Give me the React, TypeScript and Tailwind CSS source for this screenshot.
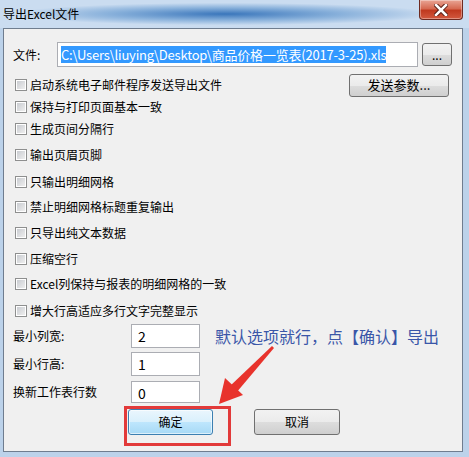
import React from 'react';

const options = [
  { label: '启动系统电子邮件程序发送导出文件', cls: '' },
  { label: '保持与打印页面基本一致', cls: '' },
  { label: '生成页间分隔行', cls: '' },
  { label: '输出页眉页脚', cls: 'mt-[4px]' },
  { label: '只输出明细网格', cls: 'mt-[5px]' },
  { label: '禁止明细网格标题重复输出', cls: 'mt-[3px]' },
  { label: '只导出纯文本数据', cls: 'mt-[4px]' },
  { label: '压缩空行', cls: 'mt-[4px]' },
  { label: 'Excel列保持与报表的明细网格的一致', cls: 'mt-[3px]' },
  { label: '增大行高适应多行文字完整显示', cls: 'mt-[5px]' },
];

const btn =
  'flex items-center justify-center rounded-[3px] border border-[#707070] bg-[linear-gradient(#f2f2f2_0%,#ebebeb_50%,#dddddd_51%,#cfcfcf_100%)] text-[12px] text-black';

const Checkbox: React.FC = () => (
  <div className="w-[12px] h-[12px] border border-[#8e8f8f] bg-white p-[1px]">
    <div className="w-full h-full bg-[linear-gradient(135deg,#c9ccd1_0%,#eeeeee_100%)]" />
  </div>
);

const App: React.FC = () => {
  return (
    <div className="relative w-[469px] h-[457px] overflow-hidden flex flex-col bg-[#bcd2ea] font-['Noto_Sans_CJK_SC',sans-serif]">
      {/* title bar */}
      <div className="relative h-[28px] flex items-center pl-[3px] bg-[radial-gradient(ellipse_45%_40%_at_48%_50%,#3a76bb_0%,#89b1db_55%,#cadcf0_100%)]">
        <span className="text-[12px] leading-none text-black">导出Excel文件</span>
        <div className="absolute top-0 left-[419px] w-[44px] h-[20px] rounded-b-[4px] border border-t-0 border-[#6e2a20] bg-[linear-gradient(#e9a595_0%,#d66a52_45%,#c0391f_55%,#d2593f_100%)] flex items-center justify-center shadow-[inset_0_0_0_1px_rgba(255,255,255,0.35)]">
          <svg width="14" height="12" viewBox="0 0 14 12">
            <path d="M2 1 L12 11 M12 1 L2 11" stroke="#5a2018" strokeWidth="4.5" strokeLinecap="square" />
            <path d="M2 1 L12 11 M12 1 L2 11" stroke="#ffffff" strokeWidth="2.5" strokeLinecap="square" />
          </svg>
        </div>
      </div>

      {/* client area */}
      <div className="flex-1 ml-[3px] mr-[6px] mb-[5px] border border-[#6f7d8f] bg-[#f0f0f0] pl-[9px] pt-[13px] text-[12px] text-black">
        <div className="flex items-center h-[25px]">
          <div className="w-[44px]">文件:</div>
          <div className="w-[361px] h-[25px] border border-[#abadb3] bg-white flex items-center pl-[3px]">
            <span className="bg-[#3399ff] text-white text-[13px] leading-[17px] tracking-[-0.2px]">
              C:\Users\liuying\Desktop\商品价格一览表(2017-3-25).xls
            </span>
          </div>
          <div className={`${btn} ml-[4px] w-[30px] h-[23px] text-[11px] text-[#444]`}>...</div>
        </div>

        <div className="mt-[7px] flex flex-col">
          {options.map((o, i) => (
            <div key={i} className={`flex items-center h-[22px] ${o.cls}`}>
              <div className="ml-[2px]">
                <Checkbox />
              </div>
              <span className="ml-[3px] whitespace-nowrap">{o.label}</span>
              {i === 0 && <div className={`${btn} ml-auto mr-[13px] w-[100px] h-[23px] text-[13px]`}>发送参数...</div>}
            </div>
          ))}
        </div>

        <div className="mt-[2px] flex flex-col gap-[4px]">
          <div className="flex items-center h-[24px]">
            <div className="w-[118px]">最小列宽:</div>
            <div className="w-[69px] h-[24px] border border-[#abadb3] bg-white pl-[6px] text-[14px] leading-[22px]">2</div>
            <span className="ml-[15px] text-[16px] text-[#3a56a8] whitespace-nowrap">默认选项就行，点【确认】导出</span>
          </div>
          <div className="flex items-center h-[24px]">
            <div className="w-[118px]">最小行高:</div>
            <div className="w-[69px] h-[24px] border border-[#abadb3] bg-white pl-[6px] text-[14px] leading-[22px]">1</div>
          </div>
          <div className="flex items-center h-[24px]">
            <div className="w-[118px]">换新工作表行数</div>
            <div className="w-[69px] h-[22px] border border-[#abadb3] bg-white pl-[6px] text-[14px] leading-[22px]">0</div>
          </div>
        </div>

        <div className="mt-[5px] flex">
          <div className="ml-[115px] w-[85px] h-[26px] rounded-[3px] border border-[#3c7fb1] bg-[linear-gradient(#eaf6fd_0%,#d9f0fc_50%,#bee6fd_51%,#a7d9f5_100%)] flex items-center justify-center shadow-[inset_0_0_0_1px_rgba(255,255,255,0.6)]">
            确定
          </div>
          <div className={`${btn} ml-[41px] w-[86px] h-[26px]`}>取消</div>
        </div>
      </div>

      {/* annotation */}
      <div className="absolute left-[124px] top-[406px] w-[107px] h-[40px] border-[3px] border-[#e23a3a]" />
      <svg className="absolute left-0 top-0 pointer-events-none" width="469" height="457" viewBox="0 0 469 457">
        <polygon points="272,346 274,348 236,393 229,387" fill="#e8332c" />
        <polygon points="219,404 225,378 243,395" fill="#e8332c" />
      </svg>
    </div>
  );
};

export default App;
